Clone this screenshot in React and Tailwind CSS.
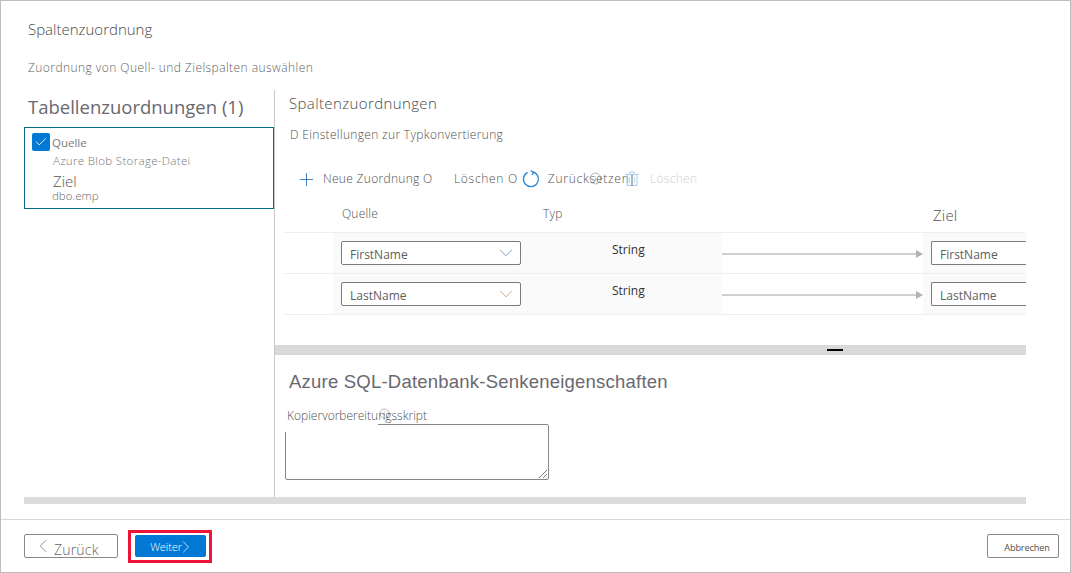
import React from "react";
import { Check, ChevronDown, ChevronLeft, ChevronRight, Plus, Info } from "lucide-react";

const font = { fontFamily: '"Open Sans","Noto Sans",sans-serif' };

function MapRow({ name, chevron }) {
  return (
    <div className="flex h-[41px] border-b border-[#efefef]">
      <div className="w-[49px]" />
      <div className="flex w-[389px] bg-[#fafafa]">
        <div className="ml-2 mt-2 flex h-[24px] w-[180px] items-center justify-between rounded-[2px] border border-[#7d7b79] bg-white pl-2 pr-[3px] text-[12px] text-[#605e5c]">
          <span className="pt-[3px]">{name}</span>
          <ChevronDown size={22} strokeWidth={0.7} color={chevron} />
        </div>
        <div className="ml-[91px] mt-[7px] text-[12px] leading-[20px] text-[#323130]">String</div>
      </div>
      <div className="flex w-[201px] items-center pt-[1px]">
        <div className="h-[2px] flex-1 bg-[#cfcfcf]" />
        <div className="h-0 w-0 border-y-[4px] border-l-[7px] border-y-transparent border-l-[#b5b2af]" />
      </div>
      <div className="flex flex-1 bg-[#fafafa] pl-2 pt-2">
        <div className="flex h-[24px] flex-1 items-center rounded-l-[2px] border-y border-l border-[#7d7b79] bg-white pl-2 text-[12px] text-[#605e5c]">
          <span className="pt-[3px]">{name}</span>
        </div>
      </div>
    </div>
  );
}

export default function App() {
  return (
    <div className="flex h-[573px] w-[1071px] flex-col border border-[#bdbdbd] bg-white text-[#605e5c]" style={font}>
      <div className="h-[89px] shrink-0 pl-[27px]">
        <div className="pt-[17px] text-[15px] font-light leading-[22px] text-[#4a4a4a]">Spaltenzuordnung</div>
        <div className="pt-[20px] text-[12px] font-light leading-[16px] tracking-[0.44px] text-[#5f5f5f]">Zuordnung von Quell- und Zielspalten auswählen</div>
      </div>

      <div className="flex h-[407px] shrink-0 pl-[23px] pr-[44px]">
        <div className="w-[250px] shrink-0">
          <div className="pl-1 pt-[3px] text-[18.5px] leading-[28px] text-[#6a6870]">Tabellenzuordnungen (1)</div>
          <div className="mt-[6px] h-[82px] border border-[#0b6a8a] pl-[7px] pt-1">
            <div className="flex items-center">
              <div className="flex h-[18px] w-[18px] items-center justify-center rounded-[2px] bg-[#0078d4]">
                <Check size={14} strokeWidth={1.5} color="white" />
              </div>
              <span className="ml-[2px] mt-[3px] text-[11.5px] leading-[16px] text-[#7a7a7a]">Quelle</span>
            </div>
            <div className="pl-[20px]">
              <div className="ml-[1px] mt-[2px] whitespace-nowrap text-[11.5px] font-light leading-[16px] tracking-[0.33px] text-[#777]">Azure Blob Storage-Datei</div>
              <div className="pl-[1px] pt-[3px] text-[15px] font-light leading-[18px] text-[#555]">Ziel</div>
              <div className="mt-[-1px] w-fit text-[11.5px] font-light leading-[14px] text-[#6a6a6a]">dbo.emp</div>
            </div>
          </div>
        </div>

        <div className="flex min-w-0 flex-1 flex-col border-l border-[#c8c8c8]">
          <div className="h-[255px] shrink-0">
            <div className="pl-[14px] pt-[2px] text-[15px] font-light leading-[22px] tracking-[0.38px] text-[#4a4a4a]">Spaltenzuordnungen</div>
            <div className="pl-[15px] pt-[13px] text-[12px] font-light leading-[16px] tracking-[0.33px] text-[#4f4f4f]">D Einstellungen zur Typkonvertierung</div>

            <div className="relative mt-[26px] flex h-[20px] items-center pl-[21px] text-[12px] font-light tracking-[0.3px] text-[#4f4f4f]">
              <Plus size={21} strokeWidth={1} color="#2f6fb5" />
              <span className="ml-[6px] w-[131px] shrink-0 whitespace-nowrap">Neue Zuordnung O</span>
              <span className="whitespace-nowrap tracking-[0.7px]">Löschen O</span>
              <svg width="18" height="18" viewBox="0 0 18 18" fill="none" stroke="#2b88d8" strokeWidth="1.3" className="ml-[4px] shrink-0">
                <path d="M5.6 2.4A7.5 7.5 0 1 0 11.6 2.1" />
                <path d="M8.6 0.9L11.6 2.1L10.2 5" />
              </svg>
              <span className="ml-[8px] whitespace-nowrap tracking-[0.75px]">Zurücksetzen</span>
              <Info size={13} strokeWidth={1} color="#777" className="absolute left-[314px] top-[3px]" />
              <svg width="14" height="16" viewBox="0 0 14 16" fill="none" className="absolute left-[350px] top-[2px]">
                <path d="M2 3.5H12V14.5H2ZM0.5 3.5H13.5M5 3.5V1H9V3.5" stroke="#a6cdf0" strokeWidth="1" />
                <path d="M4.5 6V12M9.5 6V12" stroke="#bcdcf5" strokeWidth="1" />
                <path d="M7 4V15" stroke="#5a6b7a" strokeWidth="1" />
              </svg>
              <span className="absolute left-[375px] tracking-[0.3px] text-[#cfcfcf]">Löschen</span>
            </div>

            <div className="ml-[9px] mt-[16px]">
              <div className="flex h-[27px] text-[12px] font-light tracking-[0.2px] text-[#4f4f4f]">
                <span className="ml-[58px] w-[201px]">Quelle</span>
                <span className="w-[390px]">Typ</span>
                <span className="text-[15px] leading-[20px]">Ziel</span>
              </div>
              <div className="border-t border-[#efefef]">
                <MapRow name="FirstName" chevron="#2b6cb0" />
                <MapRow name="LastName" chevron="#b07a3a" />
              </div>
            </div>
          </div>

          <div className="relative h-[10px] shrink-0 bg-[#d9d9d9]">
            <div className="absolute left-[552px] top-[4px] h-[2px] w-[16px] bg-black" />
          </div>

          <div className="relative flex-1 pl-[14px]">
            <div className="whitespace-nowrap pt-[15px] text-[18.5px] leading-[24px] tracking-[0.22px] text-[#6a6870]" style={{ fontFamily: '"Liberation Sans",sans-serif' }}>Azure SQL-Datenbank-Senkeneigenschaften</div>
            <div className="ml-[-4px] mt-[30px] h-[56px] w-[264px] rounded-[2px] border border-[#8a8886] bg-white" />
            <svg width="10" height="10" viewBox="0 0 10 10" className="absolute left-[263px] top-[114px]">
              <path d="M1 9L9 1M5 9L9 5" stroke="#777" strokeWidth="1" />
            </svg>
            <div className="absolute left-[9px] top-[52px] h-[25px] w-[94px] bg-white" />
            <div className="absolute left-[12px] top-[52px] whitespace-nowrap text-[12px] font-light leading-[18px] text-[#4f4f4f]">Kopiervorbereitungsskript</div>
            <Info size={11} strokeWidth={1} color="#666" className="absolute left-[104px] top-[53px]" />
          </div>
        </div>
      </div>

      <div className="ml-[23px] mr-[44px] h-[7px] shrink-0 bg-[#dcdcdc]" />

      <div className="mt-[15px] flex flex-1 items-center justify-between border-t border-[#d8d8d8] pl-[23px] pr-[11px]">
        <div className="flex items-center">
          <button className="flex h-[24px] w-[94px] items-center rounded-[2px] border border-[#8a8886] pl-[10px] text-[14px] font-light text-[#5f5f5f]">
            <ChevronLeft size={22} strokeWidth={0.9} color="#8a7a6a" className="ml-[-3px]" />
            <span className="pt-[7px] leading-[20px] tracking-[0.2px]">Zurück</span>
          </button>
          <div className="ml-[10px] flex h-[33px] w-[84px] items-center justify-center border-[3px] border-[#ee1438]">
            <button className="flex h-[22px] w-[71px] items-center justify-center rounded-[2px] bg-[#0078d4] pl-[6px] text-[11px] font-light tracking-[-0.1px] text-white">
              <span className="pt-[3px]">Weiter</span>
              <ChevronRight size={20} strokeWidth={0.9} color="white" className="ml-[-6px] mt-[1px]" />
            </button>
          </div>
        </div>
        <button className="h-[24px] w-[72px] rounded-[2px] border border-[#8a8886] pl-[8px] pt-[3px] text-[9.2px] tracking-[-0.15px] text-[#4f4f4f]">Abbrechen</button>
      </div>
    </div>
  );
}
